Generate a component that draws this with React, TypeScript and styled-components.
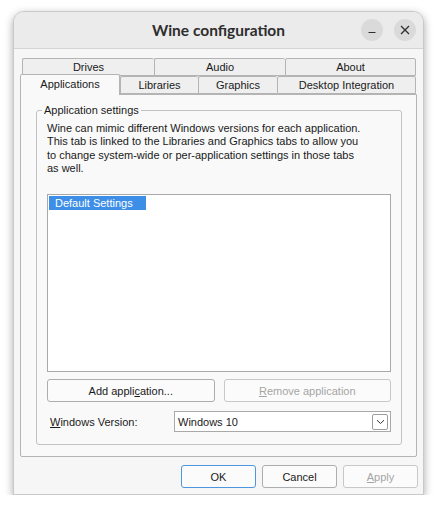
import React from 'react'
import styled, { createGlobalStyle } from 'styled-components'

const GlobalStyle = createGlobalStyle`
  html, body {
    margin: 0;
    padding: 0;
    background: #ffffff;
  }
  body {
    font-family: "Liberation Sans", Arial, sans-serif;
    font-size: 11px;
    color: #1a1a1a;
  }
`

type TabDef = { label: string; width: number; selected?: boolean }

const backTabs: TabDef[] = [
  { label: 'Drives', width: 132 },
  { label: 'Audio', width: 131 },
  { label: 'About', width: 131 },
]

const frontTabs: TabDef[] = [
  { label: 'Applications', width: 100, selected: true },
  { label: 'Libraries', width: 78 },
  { label: 'Graphics', width: 79 },
  { label: 'Desktop Integration', width: 139 },
]

const descriptionLines = [
  'Wine can mimic different Windows versions for each application.',
  'This tab is linked to the Libraries and Graphics tabs to allow you',
  'to change system-wide or per-application settings in those tabs',
  'as well.',
]

export default function App() {
  return (
    <Page>
      <GlobalStyle />
      <Window>
        <TitleBar>
          <Title>Wine configuration</Title>
          <TitleButtons>
            <RoundButton aria-label="Minimize">
              <svg width="10" height="10" viewBox="0 0 10 10">
                <path d="M1.5 7.5h7" stroke="#2e2e2e" strokeWidth="1.2" />
              </svg>
            </RoundButton>
            <RoundButton aria-label="Close">
              <svg width="10" height="10" viewBox="0 0 10 10">
                <path d="M1 1l8 8M9 1l-8 8" stroke="#2e2e2e" strokeWidth="1.3" />
              </svg>
            </RoundButton>
          </TitleButtons>
        </TitleBar>

        <Body>
          <Tabs>
            <TabRow $inset={2}>
              {backTabs.map(t => (
                <Tab key={t.label} style={{ width: t.width }}>{t.label}</Tab>
              ))}
            </TabRow>
            <TabRow $inset={0}>
              {frontTabs.map(t => (
                <Tab key={t.label} $selected={t.selected} style={{ width: t.width }}>{t.label}</Tab>
              ))}
            </TabRow>
          </Tabs>

          <TabPage>
            <GroupBox>
              <Legend>Application settings</Legend>
              <Description>
                {descriptionLines.map(line => (
                  <div key={line}>{line}</div>
                ))}
              </Description>

              <ListBox>
                <ListItem $selected>Default Settings</ListItem>
              </ListBox>

              <ButtonRow>
                <PushButton>Add appli<u>c</u>ation...</PushButton>
                <PushButton disabled><u>R</u>emove application</PushButton>
              </ButtonRow>

              <VersionRow>
                <FieldLabel><u>W</u>indows Version:</FieldLabel>
                <Combo>
                  <ComboValue>Windows 10</ComboValue>
                  <ComboArrow>
                    <svg width="9" height="6" viewBox="0 0 9 6">
                      <path d="M1 1.2l3.5 3.3L8 1.2" fill="none" stroke="#333" strokeWidth="1" />
                    </svg>
                  </ComboArrow>
                </Combo>
              </VersionRow>
            </GroupBox>
          </TabPage>

          <DialogButtons>
            <DialogButton $default>OK</DialogButton>
            <DialogButton>Cancel</DialogButton>
            <DialogButton disabled><u>A</u>pply</DialogButton>
          </DialogButtons>
        </Body>
      </Window>
    </Page>
  )
}

const Page = styled.div`
  padding: 11px 0 0 13px;
`

const Window = styled.div`
  width: 411px;
  height: 484px;
  box-sizing: border-box;
  display: flex;
  flex-direction: column;
  background: #f6f6f6;
  border: 1px solid #c9c9c9;
  border-radius: 11px 11px 0 0;
  box-shadow: 0 3px 9px rgba(0, 0, 0, 0.35);
  overflow: hidden;
`

const TitleBar = styled.div`
  position: relative;
  height: 37px;
  flex: none;
  display: flex;
  align-items: center;
  justify-content: center;
  background: #ebebeb;
  border-bottom: 1px solid #d5d5d5;
  box-sizing: border-box;
`

const Title = styled.div`
  font-family: Lato, "Noto Sans", sans-serif;
  font-weight: 700;
  font-size: 15.5px;
  color: #2e2e2e;
`

const TitleButtons = styled.div`
  position: absolute;
  right: 7px;
  top: 7px;
  display: flex;
  gap: 11px;
`

const RoundButton = styled.div`
  width: 22px;
  height: 22px;
  border-radius: 50%;
  background: #dadada;
  display: flex;
  align-items: center;
  justify-content: center;
`

const Body = styled.div`
  flex: 1;
  display: flex;
  flex-direction: column;
  padding: 9px 6px 0 6px;
`

const Tabs = styled.div`
  display: flex;
  flex-direction: column;
  position: relative;
  z-index: 1;
`

const TabRow = styled.div<{ $inset: number }>`
  display: flex;
  align-items: flex-end;
  height: 18px;
  padding-left: ${p => p.$inset}px;
`

const Tab = styled.div<{ $selected?: boolean }>`
  box-sizing: border-box;
  height: ${p => (p.$selected ? 21 : 18)}px;
  margin-bottom: ${p => (p.$selected ? -1 : 0)}px;
  border: 1px solid #b4b4b4;
  border-bottom: ${p => (p.$selected ? 'none' : '1px solid #b4b4b4')};
  border-right-width: ${p => (p.$selected ? 1 : 0)}px;
  border-radius: 2px 2px 0 0;
  background: ${p => (p.$selected ? '#f9f9f9' : '#efefef')};
  display: flex;
  align-items: center;
  justify-content: center;
  padding-bottom: ${p => (p.$selected ? 2 : 0)}px;
  font-size: 11px;
  color: #1a1a1a;
  white-space: nowrap;

  &:last-child {
    border-right-width: 1px;
  }
`

const TabPage = styled.div`
  height: 363px;
  box-sizing: border-box;
  border: 1px solid #b4b4b4;
  border-radius: 0 0 2px 2px;
  background: #f9f9f9;
  padding: 9px 14px 0 15px;
`

const GroupBox = styled.fieldset`
  margin: 0;
  height: 341px;
  box-sizing: border-box;
  border: 1px solid #c2c2c2;
  border-radius: 3px;
  padding: 3px 10px 0 10px;
  display: flex;
  flex-direction: column;
`

const Legend = styled.legend`
  padding: 0 2px;
  margin-left: -5px;
  font-size: 11px;
  line-height: 13px;
`

const Description = styled.div`
  margin-top: 2px;
  font-size: 11px;
  line-height: 13.3px;
  white-space: nowrap;
`

const ListBox = styled.div`
  margin-top: 19px;
  height: 178px;
  box-sizing: border-box;
  border: 1px solid #a9a9a9;
  background: #ffffff;
  padding: 1px;
`

const ListItem = styled.div<{ $selected?: boolean }>`
  width: 97px;
  height: 14px;
  line-height: 14px;
  padding-left: 6px;
  box-sizing: border-box;
  font-size: 11px;
  background: ${p => (p.$selected ? '#3d8ee7' : 'transparent')};
  color: ${p => (p.$selected ? '#ffffff' : '#1a1a1a')};
`

const ButtonRow = styled.div`
  display: grid;
  grid-template-columns: 1fr 1fr;
  column-gap: 9px;
  margin-top: 7px;
`

const PushButton = styled.button`
  height: 23px;
  box-sizing: border-box;
  border: 1px solid #adadad;
  border-radius: 3px;
  background: #fbfbfb;
  font-family: inherit;
  font-size: 11px;
  color: #1a1a1a;
  padding: 0;

  &:disabled {
    color: #a5a5a5;
    border-color: #c8c8c8;
  }
`

const VersionRow = styled.div`
  display: flex;
  align-items: center;
  margin-top: 9px;
`

const FieldLabel = styled.div`
  width: 127px;
  box-sizing: border-box;
  padding-left: 3px;
  font-size: 11px;
`

const Combo = styled.div`
  flex: 1;
  height: 21px;
  box-sizing: border-box;
  border: 1px solid #a9a9a9;
  background: #ffffff;
  display: flex;
  align-items: center;
  padding: 0 2px 0 3px;
`

const ComboValue = styled.div`
  flex: 1;
  font-size: 11px;
`

const ComboArrow = styled.div`
  width: 16px;
  height: 16px;
  box-sizing: border-box;
  border: 1px solid #9c9c9c;
  border-radius: 2px;
  display: flex;
  align-items: center;
  justify-content: center;
`

const DialogButtons = styled.div`
  display: flex;
  justify-content: flex-end;
  gap: 6px;
  margin: 8px -1px 0 0;
`

const DialogButton = styled.button<{ $default?: boolean }>`
  width: 75px;
  height: 23px;
  box-sizing: border-box;
  border: 1px solid ${p => (p.$default ? '#4c97df' : '#adadad')};
  border-radius: 3px;
  background: #fbfbfb;
  font-family: inherit;
  font-size: 11px;
  color: #1a1a1a;
  padding: 0;

  &:disabled {
    color: #a5a5a5;
    border-color: #c8c8c8;
  }
`
